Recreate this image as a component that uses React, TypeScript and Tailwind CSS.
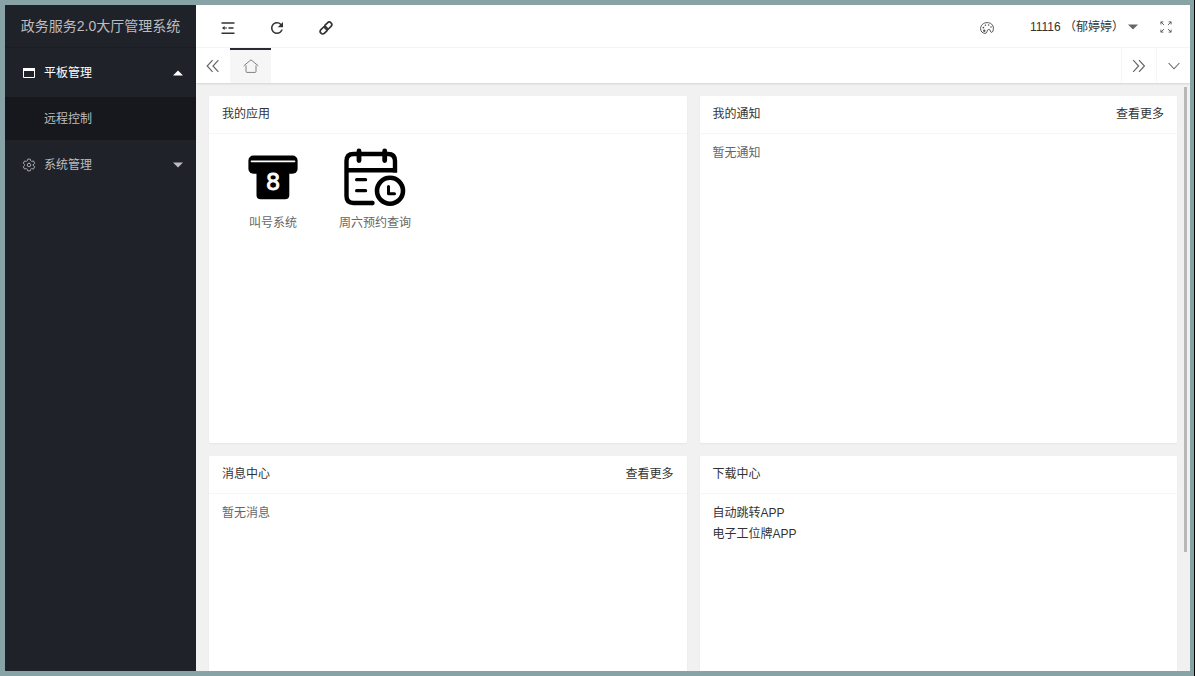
import { useState, type ReactNode } from "react";
import { MdRefresh } from "react-icons/md";
import { IoSettingsOutline } from "react-icons/io5";

function CollapseIcon() {
  return (
    <svg width="14" height="12" viewBox="0 0 14 12" fill="none" stroke="currentColor" strokeWidth="1.4" aria-hidden="true">
      <path d="M0.5 1H13.5M7.5 6H12.5M0.5 11.2H13.5" />
      <path d="M2 6H6" strokeWidth="1" />
      <path d="M3.6 4L1 6L3.6 8Z" fill="currentColor" stroke="none" />
    </svg>
  );
}

function ChainIcon() {
  return (
    <svg width="14" height="14" viewBox="0 0 14 14" fill="none" stroke="currentColor" strokeWidth="1.7" aria-hidden="true">
      <rect x="5.2" y="2.15" width="8" height="5" rx="2.5" transform="rotate(-45 9.2 4.65)" />
      <rect x="0.8" y="6.85" width="8" height="5" rx="2.5" transform="rotate(-45 4.8 9.35)" />
    </svg>
  );
}

function PaletteIcon() {
  return (
    <svg width="14" height="12" viewBox="0 0 14 12" fill="none" stroke="currentColor" aria-hidden="true">
      <path d="M5 11.4C2.4 11.2 0.6 9.4 0.6 6.8C0.6 3.2 3.4 0.6 7.2 0.6C10.8 0.6 13.4 3 13.4 6.2C13.4 8.6 12.6 10.4 11.4 10.4C10.2 10.4 10.8 7.4 8.8 7.4C6.4 7.4 7.8 11.6 5 11.4Z" />
      <g fill="currentColor" stroke="none">
        <circle cx="3.4" cy="5.6" r="0.9" />
        <circle cx="5.4" cy="3.2" r="0.8" />
        <circle cx="8.6" cy="3" r="0.8" />
        <circle cx="11" cy="5" r="0.8" />
        <circle cx="4.3" cy="8.8" r="1.2" />
      </g>
    </svg>
  );
}

function HomeIcon() {
  return (
    <svg width="16" height="14" viewBox="0 0 16 14" fill="none" stroke="currentColor" strokeLinejoin="round" strokeLinecap="round" aria-hidden="true">
      <path d="M1 6.6L8 0.8L15 6.6M3 6.8V12.5Q3 13.4 4 13.4H12Q13 13.4 13 12.5V6.8" />
    </svg>
  );
}

function DoubleChevron({ direction }: { direction: "left" | "right" }) {
  return (
    <svg width="14" height="14" viewBox="0 0 14 14" fill="none" stroke="currentColor" strokeWidth="1.2" aria-hidden="true">
      {direction === "left" ? (
        <path d="M6.6 1.2L1.2 7L6.6 12.8M12.4 1.2L7 7L12.4 12.8" />
      ) : (
        <path d="M1.2 1.2L6.6 7L1.2 12.8M7 1.2L12.4 7L7 12.8" />
      )}
    </svg>
  );
}

function ChevronDown() {
  return (
    <svg width="12" height="8" viewBox="0 0 12 8" fill="none" stroke="currentColor" strokeWidth="1.1" aria-hidden="true">
      <path d="M0.6 1L6 6.8L11.4 1" />
    </svg>
  );
}

function FullscreenIcon() {
  return (
    <svg width="12" height="12" viewBox="0 0 12 12" fill="none" stroke="currentColor" strokeWidth="0.9" aria-hidden="true">
      <path d="M0.9 3.4V0.9H3.4M0.9 0.9L4 4M8.6 0.9H11.1V3.4M11.1 0.9L8 4M0.9 8.6V11.1H3.4M0.9 11.1L4 8M8.6 11.1H11.1V8.6M11.1 11.1L8 8" />
    </svg>
  );
}

function WindowIcon() {
  return (
    <svg width="12" height="10" viewBox="0 0 12 10" fill="none" stroke="currentColor" aria-hidden="true">
      <path d="M0.5 1V9.5H11.5V1" />
      <path d="M0 1.5H12" strokeWidth="3" />
    </svg>
  );
}

function Caret({ up = false }: { up?: boolean }) {
  return (
    <svg width="10" height="6" viewBox="0 0 10 6" fill="currentColor" aria-hidden="true">
      <path d={up ? "M0 5.5H10L5 0.5Z" : "M0 0.5H10L5 5.5Z"} />
    </svg>
  );
}

function TicketIcon() {
  return (
    <svg width="60" height="60" viewBox="0 0 60 60" aria-hidden="true">
      <rect x="5.4" y="8.5" width="49.2" height="18.2" rx="5" />
      <path d="M13.5 20H46.3V48Q46.3 52.3 42 52.3H17.8Q13.5 52.3 13.5 48Z" />
      <path d="M8.5 14.3H51.5" stroke="#fff" strokeWidth="1.7" strokeLinecap="round" />
      <text x="30" y="43" textAnchor="middle" fill="#fff" stroke="#fff" strokeWidth="0.8" fontSize="23" fontFamily="DejaVu Sans, sans-serif">
        8
      </text>
    </svg>
  );
}

function CalendarIcon() {
  return (
    <svg width="62" height="60" viewBox="0 0 62 60" fill="none" stroke="#000" strokeWidth="4.4" aria-hidden="true">
      <path d="M51 25.5V14Q51 7 44 7H9.5Q2.5 7 2.5 14V49Q2.5 56 9.5 56H28.5" />
      <path d="M28 56H28.5" strokeLinecap="round" />
      <path d="M2.5 23.3H53" />
      <path d="M15 4V13.5M40.7 4V13.5" strokeWidth="4.8" strokeLinecap="round" />
      <path d="M12.6 32.7H21.6M12.6 43.7H21.6" strokeWidth="3.2" strokeLinecap="round" />
      <circle cx="46" cy="43.7" r="13" strokeWidth="4.6" />
      <path d="M44.5 39.5V46.8H50.5" strokeWidth="3" strokeLinecap="round" strokeLinejoin="round" />
    </svg>
  );
}

function Card({ title, more = false, children }: { title: string; more?: boolean; children: ReactNode }) {
  return (
    <section className="min-h-[347px] min-w-0 rounded-xs bg-white shadow-[0_1px_2px_0_rgba(0,0,0,0.05)]">
      <header className="flex h-[38px] items-center justify-between border-b border-[#f6f6f6] px-[13px] text-[#333]">
        <h2>{title}</h2>
        {more && <a href="#more">查看更多</a>}
      </header>
      {children}
    </section>
  );
}

function AppLink({ label, icon }: { label: string; icon: ReactNode }) {
  return (
    <a href="#app" className="flex flex-col items-center gap-[6px]">
      {icon}
      <span>{label}</span>
    </a>
  );
}

export default function App() {
  const [open, setOpen] = useState(true);

  return (
    <div className="h-screen border-r border-black bg-[#87a3a6] py-[5px] pr-1 pl-[5px] font-['Liberation_Sans','Noto_Sans_CJK_SC',sans-serif] text-xs leading-[21px] text-[#666]">
      <div className="flex h-full overflow-hidden bg-[#f1f1f1]">
        <aside className="w-[191px] shrink-0 bg-[#20222a] text-[#bcbdbf]">
          <h1 className="flex h-[43px] items-center justify-center border-b border-[#1b1d24] text-sm whitespace-nowrap">
            政务服务2.0大厅管理系统
          </h1>
          <nav>
            <button
              type="button"
              aria-expanded={open}
              onClick={() => setOpen(!open)}
              className="flex h-[49px] w-full items-center pr-[13px] pl-[18px] text-white"
            >
              <WindowIcon />
              <span className="ml-[9px] flex-1 pt-0.5 text-left">平板管理</span>
              <Caret up={open} />
            </button>
            {open && (
              <a href="#remote" className="flex h-[43px] items-center bg-[#17181d] pl-[39px]">
                <span className="pt-0.5">远程控制</span>
              </a>
            )}
            <button type="button" aria-expanded="false" className="flex h-[49px] w-full items-center pr-[13px] pl-[17px]">
              <IoSettingsOutline size={14} aria-hidden="true" />
              <span className="ml-2 flex-1 pt-0.5 text-left">系统管理</span>
              <Caret />
            </button>
          </nav>
        </aside>

        <div className="flex min-w-0 flex-1 flex-col">
          <header className="flex h-[43px] shrink-0 items-center border-b border-[#f6f6f6] bg-white pt-0.5 pr-[18px] pl-6 text-[#333]">
            <div className="flex items-center gap-8 pt-0.5">
              <button type="button" aria-label="收起菜单" className="flex w-4 justify-center">
                <CollapseIcon />
              </button>
              <button type="button" aria-label="刷新" className="flex w-[18px] justify-center">
                <MdRefresh size={18} />
              </button>
              <button type="button" aria-label="链接" className="flex w-4 justify-center">
                <ChainIcon />
              </button>
            </div>
            <div className="ml-auto flex items-center">
              <button type="button" aria-label="主题" className="mr-9 pt-0.5 text-[#555]">
                <PaletteIcon />
              </button>
              <button type="button" className="mr-[22px] flex items-center gap-1 whitespace-nowrap">
                <span>11116 （郁婷婷）</span>
                <span className="text-[#666]">
                  <Caret />
                </span>
              </button>
              <button type="button" aria-label="全屏" className="text-[#555]">
                <FullscreenIcon />
              </button>
            </div>
          </header>

          <div className="z-10 flex h-[35px] shrink-0 bg-white shadow-[0_1px_2px_0_rgba(0,0,0,0.12)]">
            <button type="button" aria-label="向左" className="flex w-[34px] items-center justify-center">
              <DoubleChevron direction="left" />
            </button>
            <button type="button" aria-label="主页" className="flex w-[41px] items-center justify-center border-t-2 border-[#292b34] bg-[#f6f6f6] pb-0.5 text-[#808080]">
              <HomeIcon />
            </button>
            <button type="button" aria-label="向右" className="ml-auto flex w-[35px] items-center justify-center border-l border-[#f6f6f6]">
              <DoubleChevron direction="right" />
            </button>
            <button type="button" aria-label="更多操作" className="flex w-[34px] items-center justify-center border-l border-[#f6f6f6]">
              <ChevronDown />
            </button>
          </div>

          <div className="relative min-h-0 flex-1">
            <main className="grid h-full auto-rows-max grid-cols-2 gap-[13px] overflow-y-auto p-[13px] [scrollbar-width:none]">
              <Card title="我的应用">
                <div className="flex flex-wrap gap-9 px-[34px] pt-[13px]">
                  <AppLink label="叫号系统" icon={<TicketIcon />} />
                  <AppLink label="周六预约查询" icon={<CalendarIcon />} />
                </div>
              </Card>
              <Card title="我的通知" more>
                <p className="px-[13px] py-[9px]">暂无通知</p>
              </Card>
              <Card title="消息中心" more>
                <p className="px-[13px] py-[9px]">暂无消息</p>
              </Card>
              <Card title="下载中心">
                <ul className="px-[13px] py-[9px] text-[#333]">
                  <li>
                    <a href="#jump">自动跳转APP</a>
                  </li>
                  <li>
                    <a href="#desk">电子工位牌APP</a>
                  </li>
                </ul>
              </Card>
            </main>
            <div className="absolute top-1 right-[3px] h-[79%] w-[3px] bg-[#b8b8b8]" />
          </div>
        </div>
      </div>
    </div>
  );
}
